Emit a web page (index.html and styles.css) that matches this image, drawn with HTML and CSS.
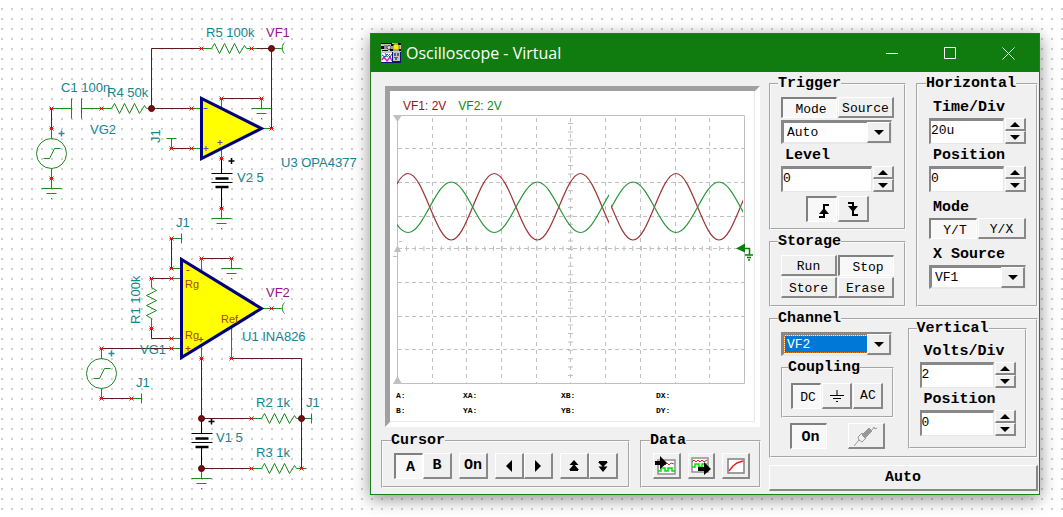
FILE: index.html
```html
<!DOCTYPE html>
<html lang="en">
<head>
<meta charset="utf-8">
<title>Oscilloscope - Virtual</title>
<link rel="stylesheet" href="styles.css">
</head>
<body>
<main class="desktop">
<svg class="schematic" width="365" height="517" viewBox="0 0 365 517" role="img" aria-label="Circuit schematic">
  <defs>
    <path id="term" d="M-2-2L2 2M-2 2L2-2M-2 0H2" stroke="#e01818" stroke-width="1"/>
    <circle id="node" r="3" fill="#7a0c10" stroke="#4a0808" stroke-width="1"/>
    <path id="resistor" d="M0 0h10l3-5l5 10l5-10l5 10l5-10l5 10l5-8l2 3h10"/>
    <path id="ground" d="M-10 0H10M-5 5H5M-.5 10h1"/>
    <path id="probe" d="M0 0h10M13-6c-3 3-3 8 0 11"/>
    <g id="source"><circle r="15"/><path d="M-8 5h6l5-10h6"/></g>
    <g id="battery" stroke="#000"><path d="M0-15V0M-10 0h21M-10 9h21M0 14V35"/><path d="M-6 5H7M-6 13.500H7" stroke-width="2.500"/></g>
  </defs>
  <g transform="translate(1.5 8.5)" fill="none">
    <g class="wire">
      <path d="M150 100V40h50M250 40h20v80M50 100v20M150 100h40M170 140h20M220 90h40"/>
      <path d="M170 230v30M150 270h20M150 320v10h20M100 340h70M100 390h30M200 250h30M200 350v60h50M230 350h70v110M200 460h50"/>
    </g>
    <g class="part">
      <path d="M50 100h20M70 90v20M80 90v20M80 100h20M50 120v10M50 160v20M190 100h10M190 140h10M165 130h10M170 130v10M260 120h10M220 90v10M260 90v10M220 140v10M220 200v10"/>
      <use href="#resistor" x="200" y="40"/><use href="#resistor" x="100" y="100"/>
      <use href="#source" x="50" y="145"/><use href="#probe" x="270" y="40"/>
      <use href="#ground" x="50" y="180"/><use href="#ground" x="260" y="100"/><use href="#ground" x="220" y="210"/>
      <path d="M170 230h10M180 225v10M170 260h10M170 270h10M170 330h10M170 340h10M200 250v13M230 250v10M260 300h10M200 338v12M230 318v32M100 340v10M100 380v10M130 390h10M140 385v10M300 410h10M310 405v10M200 460v10"/>
      <path d="M150 270v9l5 3l-10 5l10 5l-10 5l10 5l-10 5l5 3v10"/>
      <use href="#source" x="100" y="365"/><use href="#probe" x="270" y="300"/>
      <use href="#resistor" x="250" y="410"/><use href="#resistor" x="250" y="460"/>
      <use href="#ground" x="230" y="260"/><use href="#ground" x="200" y="470"/>
    </g>
    <use href="#battery" x="220" y="165"/><use href="#battery" x="200" y="425"/>
    <path class="amp" d="M200 90V150L260 120Z"/><path class="amp" d="M180 251V349L260 300Z"/>
    <path d="M202 100h4M202 140h5M204.500 137.500v5M216 134h5M218.500 131.500v5" stroke="#5050a0"/>
    <path d="M185 262h3M184 340h5M186.500 337.500v5M197 331h5M199.500 328.500v5" stroke="#a04000"/>
    <path d="M227 152.500h6M230 149.500v6M207 413h6M210 410v6" stroke="#000" stroke-width="1.500"/>
    <path d="M57 125h6M60 122v6M107 345h6M110 342v6" stroke="#20909c" stroke-width="1.500"/>
    <g>
      <use href="#term" x="200" y="40"/><use href="#term" x="250" y="40"/><use href="#term" x="50" y="100"/><use href="#term" x="50" y="120"/><use href="#term" x="100" y="100"/><use href="#term" x="190" y="100"/><use href="#term" x="170" y="140"/><use href="#term" x="190" y="140"/><use href="#term" x="220" y="90"/><use href="#term" x="260" y="90"/><use href="#term" x="270" y="120"/><use href="#term" x="220" y="150"/><use href="#term" x="220" y="200"/><use href="#term" x="50" y="170"/>
      <use href="#term" x="170" y="230"/><use href="#term" x="170" y="260"/><use href="#term" x="150" y="270"/><use href="#term" x="170" y="270"/><use href="#term" x="150" y="320"/><use href="#term" x="170" y="330"/><use href="#term" x="170" y="340"/><use href="#term" x="100" y="340"/><use href="#term" x="100" y="390"/><use href="#term" x="130" y="390"/><use href="#term" x="200" y="250"/><use href="#term" x="230" y="250"/><use href="#term" x="270" y="300"/><use href="#term" x="200" y="350"/><use href="#term" x="230" y="350"/><use href="#term" x="250" y="410"/><use href="#term" x="250" y="460"/><use href="#term" x="300" y="460"/>
      <use href="#node" x="270" y="40"/><use href="#node" x="150" y="100"/><use href="#node" x="200" y="410"/><use href="#node" x="300" y="410"/><use href="#node" x="200" y="460"/>
    </g>
  </g>
  <g class="label">
    <text x="206" y="37">R5 100k</text><text x="61" y="92">C1 100n</text><text x="107" y="97">R4 50k</text>
    <text x="90" y="134">VG2</text><text x="237" y="182">V2 5</text><text x="281" y="167">U3 OPA4377</text>
    <text transform="translate(160 143) rotate(-90)">J1</text><text x="176" y="227">J1</text>
    <text transform="translate(140 324) rotate(-90)">R1 100k</text><text x="242" y="341">U1 INA826</text>
    <text x="140" y="354">VG1</text><text x="136" y="387">J1</text><text x="256" y="407">R2 1k</text>
    <text x="306" y="407">J1</text><text x="256" y="457">R3 1k</text><text x="216" y="442">V1 5</text>
  </g>
  <g class="label label-out"><text x="266" y="37">VF1</text><text x="266" y="297">VF2</text></g>
  <g class="label label-pin"><text x="185" y="288">Rg</text><text x="185" y="339">Rg</text><text x="221" y="323">Ref</text></g>
</svg>

<section class="window" aria-label="Oscilloscope - Virtual">
  <header class="titlebar">
    <svg class="app-icon" width="20" height="20" viewBox="0 0 20 20" aria-hidden="true">
      <path fill="#c4c4c4" d="M0 0h20v20H0z"/><path fill="#000" d="M0 0h11v1H0zM0 3h3v3H0zM1 7h6v1H1zM10 1h3v2h-3zM9 6h3v2H9zM17 0h3v2h-3zM18 6h2v2h-2z"/>
      <path fill="#888" d="M3 2h3v4H3z"/><circle cx="8" cy="4.500" r="2" fill="#ddd" stroke="#444"/>
      <path fill="#ffee00" stroke="#222" stroke-width=".5" d="M13 1h4l1 2v4h-6V3z"/>
      <path fill="#fff" d="M1 10h10v9H1z"/><path fill="none" stroke="#e020d0" stroke-width="1.500" d="M1 17l2-3l3 4l3-4l2 4"/>
      <path fill="none" stroke="#2040d0" d="M1 12l3 2l2-3l3 3l2-3"/><path fill="none" stroke="#00b040" d="M4 10l2 4l3-3"/>
      <path fill="#10107a" d="M11 9h1v11h-1zM12 18h8v2h-8zM19 9h1v10h-1zM0 19h12v1H0z"/><path fill="#506080" d="M13 10h2v3h-2zM16 10h2v3h-2zM13 14h4v1h-4zM14 15h2v2h-2z"/>
    </svg>
    <h1>Oscilloscope - Virtual</h1>
    <button class="sys" type="button" aria-label="Minimize"><svg width="13" height="13" viewBox="0 0 13 13"><path d="M0 6.500h12"/></svg></button>
    <button class="sys" type="button" aria-label="Maximize"><svg width="13" height="13" viewBox="0 0 13 13"><path d="M.5.5h11v11H.5z"/></svg></button>
    <button class="sys" type="button" aria-label="Close"><svg width="13" height="13" viewBox="0 0 13 13"><path d="M.5.5l12 12M12.500.5l-12 12"/></svg></button>
  </header>

  <div class="body">
    <div class="left">
      <div class="screen">
        <div class="scales"><span>VF1: 2V</span><span class="ch2">VF2: 2V</span></div>
        <svg class="plot" viewBox="390 112 365 276" role="img" aria-label="Waveforms">
          <defs>
            <clipPath id="early"><path d="M397 115h212v270H397z"/></clipPath>
            <clipPath id="late"><path d="M611 115h132v270H611z"/></clipPath>
          </defs>
          <g fill="none" stroke="#c0c0c0">
            <path d="M397.500 115.500H744.500V383.500H397.500Z"/>
            <g stroke-dasharray="4 4"><path d="M432.500 118V383M466.500 118V383M501.500 118V383M536.500 118V383M570.500 118V383M605.500 118V383M640.500 118V383M675.500 118V383M709.500 118V383"/></g>
            <g stroke-dasharray="4 3"><path d="M398 148.500H744M398 182.500H744M398 216.500H744M398 282.500H744M398 316.500H744M398 349.500H744M398 248.500H740"/></g>
            <path d="M406 248.500H733" stroke-width="5" stroke-dasharray="1 7.700"/>
            <path d="M570.500 123V378" stroke-width="5" stroke-dasharray="1 7.400"/>
            <path d="M399 241.500h3M393 256.500h5"/>
          </g>
          <path fill="#c0c0c0" d="M393 115h9l-4.500 7zM393 384h9l-4.500-8zM394 252h7l-3.500-7z"/>
          <g fill="none" stroke="#a03438" stroke-width="1.200">
            <path clip-path="url(#early)" d="M364.900 240C380.600 240 392.300 173.500 408 173.500S435.500 240 451.200 240S478.600 173.500 494.300 173.500S521.700 240 537.400 240S564.800 173.500 580.500 173.500S608 240 623.700 240"/>
            <path clip-path="url(#late)" d="M590 173.500C605.700 173.500 617.300 240 633 240S660.300 173.500 676 173.500S703.300 240 719 240S746.300 173.500 762 173.500"/>
          </g>
          <g fill="none" stroke="#289638" stroke-width="1.200">
            <path clip-path="url(#early)" d="M364.900 182C380.600 182 392.300 232.500 408 232.500S435.500 182 451.200 182S478.600 232.500 494.300 232.500S521.700 182 537.400 182S564.800 232.500 580.500 232.500S608 182 623.700 182"/>
            <path clip-path="url(#late)" d="M590 232.500C605.700 232.500 617.300 182 633 182S660.300 232.500 676 232.500S703.300 182 719 182S746.300 232.500 762 232.500"/>
          </g>
          <path fill="#078007" d="M736 248.500l9-5v9z"/>
          <path fill="none" stroke="#078007" stroke-width="1.500" d="M744 248.500h5.500v6M745 255h8M747 257.500h4M748 260h2"/>
        </svg>
        <div class="readouts">
          <span>A:</span><span>XA:</span><span>XB:</span><span>DX:</span>
          <span>B:</span><span>YA:</span><span>YB:</span><span>DY:</span>
        </div>
      </div>
      <div class="tools">
        <fieldset class="cursor">
          <legend>Cursor</legend>
          <div class="pair"><button class="btn tool strong on" type="button">A</button><button class="btn tool strong" type="button">B</button></div>
          <button class="btn tool strong" type="button">On</button>
          <div class="pair">
            <button class="btn tool" type="button" aria-label="Left"><svg width="12" height="12" viewBox="0 0 12 12"><path d="M9 0v12L3 6z"/></svg></button>
            <button class="btn tool" type="button" aria-label="Right"><svg width="12" height="12" viewBox="0 0 12 12"><path d="M3 0v12l6-6z"/></svg></button>
          </div>
          <div class="pair">
            <button class="btn tool" type="button" aria-label="Maximum"><svg width="12" height="12" viewBox="0 0 12 12"><path d="M6 0l4.500 5H1.500zM6 4l5 6H1zM2 10h8v1H2z"/></svg></button>
            <button class="btn tool" type="button" aria-label="Minimum"><svg width="12" height="12" viewBox="0 0 12 12"><path d="M2 1h8v1H2zM1 2h10L6 7zM1.500 6.500h9L6 12z"/></svg></button>
          </div>
        </fieldset>
        <fieldset class="data">
          <legend>Data</legend>
          <button class="btn tool" type="button" aria-label="Import curve"><svg width="22" height="20" viewBox="0 0 22 20"><path fill="#fff" stroke="#909090" stroke-width="1.500" d="M3 4h17v14H3z"/><path fill="none" stroke="#f02020" d="M8 7l2 2l2-2l2 2l2-2l3 1"/><path fill="none" stroke="#00e000" stroke-width="1.500" d="M3 15h3v-3h4v3h3v-3h4v3h3"/><path d="M0 5h5V0l7 7l-7 6V9H0z"/></svg></button>
          <button class="btn tool" type="button" aria-label="Export curve"><svg width="22" height="20" viewBox="0 0 22 20"><path fill="#fff" stroke="#909090" stroke-width="1.500" d="M2 2h16v14H2z"/><path fill="none" stroke="#f02020" d="M2 6l2-2l2 2l2-2l2 2l2-2l2 2l3-2"/><path fill="none" stroke="#00e000" stroke-width="1.500" d="M2 11h3V8h4v3h3V8h5"/><path d="M8 11h6V6l7 7l-7 6v-4H8z"/></svg></button>
          <button class="btn tool" type="button" aria-label="Show curve"><svg width="20" height="20" viewBox="0 0 20 20"><path fill="#fff" stroke="#808080" stroke-width="1.500" d="M2 3h16v14H2z"/><path fill="none" stroke="#f02020" stroke-width="1.500" d="M3 15l4-5l4-3l6-2"/></svg></button>
        </fieldset>
      </div>
    </div>

    <div class="right">
      <div class="upper">
        <div class="stack">
          <fieldset class="trigger">
            <legend>Trigger</legend>
            <div class="row"><button class="btn on" type="button">Mode</button><button class="btn" type="button">Source</button></div>
            <div class="combo"><select aria-label="Trigger mode"><option>Auto</option></select></div>
            <div class="field">
              <label for="level">Level</label>
              <div class="spin"><input id="level" type="text" value="0"><div class="arrows"><button type="button" aria-label="Level up"></button><button type="button" aria-label="Level down"></button></div></div>
            </div>
            <div class="edges">
              <button class="btn tall on" type="button" aria-label="Rising edge"><svg width="12" height="14" viewBox="0 0 12 14"><path d="M6 4l5 6H1z"/><path class="line" d="M1 13h5V1h5"/></svg></button>
              <button class="btn tall" type="button" aria-label="Falling edge"><svg width="12" height="14" viewBox="0 0 12 14"><path d="M1 4h10l-5 6z"/><path class="line" d="M1 1h5v12h5"/></svg></button>
            </div>
          </fieldset>
          <fieldset class="storage">
            <legend>Storage</legend>
            <div class="row"><button class="btn" type="button">Run</button><button class="btn on" type="button">Stop</button></div>
            <div class="row"><button class="btn" type="button">Store</button><button class="btn" type="button">Erase</button></div>
          </fieldset>
        </div>
        <fieldset class="horizontal">
          <legend>Horizontal</legend>
          <div class="field">
            <label for="timediv">Time/Div</label>
            <div class="spin"><input id="timediv" type="text" value="20u"><div class="arrows"><button type="button" aria-label="Time up"></button><button type="button" aria-label="Time down"></button></div></div>
          </div>
          <div class="field">
            <label for="hpos">Position</label>
            <div class="spin"><input id="hpos" type="text" value="0"><div class="arrows"><button type="button" aria-label="Position up"></button><button type="button" aria-label="Position down"></button></div></div>
          </div>
          <div class="field spaced">
            <span class="caption">Mode</span>
            <div class="row"><button class="btn on" type="button">Y/T</button><button class="btn" type="button">Y/X</button></div>
          </div>
          <div class="field spaced">
            <label for="xsource">X Source</label>
            <div class="combo"><select id="xsource"><option>VF1</option></select></div>
          </div>
        </fieldset>
      </div>

      <fieldset class="channel">
        <legend>Channel</legend>
        <div class="stack">
          <div class="combo picked"><select aria-label="Channel"><option>VF2</option></select></div>
          <fieldset class="coupling">
            <legend>Coupling</legend>
            <div class="row">
              <button class="btn tall on" type="button">DC</button>
              <button class="btn tall" type="button" aria-label="Ground"><svg width="14" height="12" viewBox="0 0 14 12"><path class="line" d="M7 0v5M0 5.500h14M3 8.500h8M6 11.500h2"/></svg></button>
              <button class="btn tall" type="button">AC</button>
            </div>
          </fieldset>
          <div class="probe-row">
            <button class="btn tall strong on" type="button">On</button>
            <button class="btn tall" type="button" aria-label="Probe"><svg width="24" height="20" viewBox="0 0 24 20"><g fill="none" stroke="#989898"><path d="M0 20l5-6M18 4l2-3l1 2l2-1"/><path fill="#989898" d="M8 9l7-7l3 3l-7 7z"/><path d="M5 14l-1-3l4-4l4 5l-4 4z"/></g></svg></button>
          </div>
        </div>
        <fieldset class="vertical">
          <legend>Vertical</legend>
          <div class="field">
            <label for="volts">Volts/Div</label>
            <div class="spin"><input id="volts" type="text" value="2"><div class="arrows"><button type="button" aria-label="Volts up"></button><button type="button" aria-label="Volts down"></button></div></div>
          </div>
          <div class="field">
            <label for="vpos">Position</label>
            <div class="spin"><input id="vpos" type="text" value="0"><div class="arrows"><button type="button" aria-label="Position up"></button><button type="button" aria-label="Position down"></button></div></div>
          </div>
        </fieldset>
      </fieldset>
      <button class="btn tall strong auto" type="button">Auto</button>
    </div>
  </div>
</section>
</main>
</body>
</html>
```

FILE: styles.css
```css
* { box-sizing: border-box; }
body { margin: 0; font: 13px/16px "Liberation Mono", monospace; color: #000; }
button, input, select { font: inherit; color: inherit; margin: 0; }

.desktop {
  position: relative;
  min-height: 100vh;
  overflow: hidden;
  background: #fff radial-gradient(circle at 2px 9px, #d0d0d0 1px, transparent 1px) 0 0 / 10px 10px;
}
.schematic { display: block; }
.wire { stroke: #5a1c1c; }
.part { stroke: #1c8a1c; }
.amp { fill: #ffff00; stroke: #000080; stroke-width: 3; }
.label { font: 13px "Liberation Sans", sans-serif; fill: #148490; }
.label-out { fill: #90148c; }
.label-pin { font-size: 11px; fill: #a84800; }

/* Window on the desktop */
.window {
  position: absolute;
  left: 370px;
  right: 23px;
  top: 33px;
  border: 1px solid #1f7f1f;
  background: #f0f0f0;
  box-shadow: 0 4px 16px rgba(0, 0, 0, .45);
}
.titlebar { display: flex; align-items: center; height: 38px; padding: 0 2px 0 10px; background: #107c10; color: #fff; }
.titlebar h1 { flex: 1; margin: 0 0 0 5px; font: 16px/24px "Open Sans", sans-serif; }
.sys { width: 58px; height: 38px; padding: 0; border: 0; background: none; }
.sys svg { display: block; margin: auto; fill: none; stroke: #fff; }

.body { display: grid; grid-template-columns: 1fr 269px; gap: 8px; padding: 5px 1px 3px 10px; }

/* Groups and controls */
fieldset { min-width: 0; margin: 0; padding: 0; border: 2px groove #fafafa; }
legend { margin-left: -3px; padding: 0; }
legend, label, .caption, .strong { font-weight: bold; font-size: 15px; }
legend { line-height: 14px; }
.btn {
  display: flex;
  align-items: center;
  justify-content: center;
  min-width: 0;
  height: 21px;
  padding: 3px 0 0;
  border: solid;
  border-width: 1px 2px 2px 1px;
  border-color: #fff #888 #888 #fff;
  background: #f0f0f0;
}
.btn.tall, .btn.tool { height: 26px; padding-top: 0; }
.btn.on { border-width: 2px 1px 1px 2px; border-color: #808080 #fff #fff #808080; background: #f8f8f8; padding: 3px 0 0 3px; }
.line { fill: none; stroke: #000; stroke-width: 1; }
.edges .line { stroke-width: 2; }
.row { display: grid; grid-auto-flow: column; grid-auto-columns: minmax(0, 1fr); gap: 1px; }

.combo { position: relative; height: 24px; }
.combo select {
  appearance: none;
  width: 100%;
  height: 100%;
  padding: 0 3px;
  border: solid;
  border-width: 3px 2px 2px 3px;
  border-color: #888 #e8e8e8 #e8e8e8 #888;
  border-radius: 0;
  background: #fff;
}
.combo::before {
  content: "";
  position: absolute;
  inset: 2px 1px 1px auto;
  width: 21px;
  border: solid;
  border-width: 1px 2px 2px 1px;
  border-color: #fff #888 #888 #fff;
  background: #f0f0f0;
  pointer-events: none;
}
.combo::after {
  content: "";
  position: absolute;
  right: 8px;
  top: 10px;
  border: solid transparent;
  border-width: 5px 5px 0;
  border-top-color: #000;
  pointer-events: none;
}
.picked select { color: #fff; background: #0078d7 padding-box; box-shadow: inset 0 0 0 1px #fff; outline: 1px dotted #f08020; outline-offset: -4px; }

.field { display: grid; grid-template-columns: minmax(0, 1fr); gap: 2px; }
.field label, .caption { margin-left: 4px; line-height: 16px; white-space: nowrap; }
.spin { display: flex; gap: 1px; height: 26px; }
.spin input {
  flex: 1;
  width: 0;
  min-width: 0;
  padding: 0 0 2px;
  border: solid;
  border-width: 3px 1px 1px 2px;
  border-color: #888 #e8e8e8 #e8e8e8 #888;
  border-radius: 0;
  background: #fff;
}
.arrows { display: grid; width: 21px; grid-template-rows: 1fr 1fr; }
.arrows button {
  display: grid;
  place-items: center;
  padding: 0;
  border: solid;
  border-width: 1px 2px 2px 1px;
  border-color: #fff #888 #888 #fff;
  background: #f0f0f0;
}
.arrows button::before { content: ""; border: solid transparent; border-width: 0 5px 5px; border-bottom-color: #000; }
.arrows button + button::before { border-width: 5px 5px 0; border-top-color: #000; }

/* Display */
.left { display: flex; flex-direction: column; gap: 7px; padding-top: 9px; }
.screen {
  margin: 0 1px 0 4px;
  border: 5px solid;
  border-color: #a0a0a0 #fff #fff #a0a0a0;
  background: #fff;
  box-shadow: inset -1px -1px #e8e8e8;
  padding-bottom: 4px;
}
.scales { display: flex; gap: 12px; height: 21px; padding: 7px 0 0 13px; font: 12px/16px "Liberation Sans", sans-serif; color: #8c1820; }
.ch2 { color: #088a18; }
.plot { display: block; width: 100%; }
.readouts { display: grid; grid-template-columns: 67fr 98fr 95fr 99fr; padding-left: 6px; font-size: 8px; font-weight: bold; line-height: 15px; }
.tools { display: grid; grid-template-columns: 249fr 121fr; gap: 10px; }
.tools fieldset { padding: 5px 9px 7px 11px; }
.cursor, .data { display: flex; gap: 7px; }
.pair { display: flex; }
.tool { width: 29px; }
.tool svg { flex: none; }

/* Control columns */
.right { display: flex; flex-direction: column; gap: 5px; }
.upper { display: grid; grid-template-columns: 137fr 122fr; gap: 10px; }
.stack { display: flex; flex-direction: column; gap: 5px; min-width: 0; }
.trigger { padding: 6px 10px; }
.storage { padding: 6px 10px 7px; }
.storage .row + .row { margin-top: 1px; }
.trigger .combo { margin: 2px 2px 4px 0; }
.edges { display: flex; justify-content: center; gap: 1px; margin-top: 4px; }
.edges .btn { width: 31px; }
.horizontal { padding: 9px 10px 0 11px; }
.horizontal .field + .field { margin-top: 4px; }
.horizontal .field + .spaced { margin-top: 8px; }

.channel { display: grid; grid-template-columns: 113fr 120fr; gap: 14px; padding: 6px 9px 7px 10px; }
.channel .combo { margin-right: 2px; }
.coupling { padding: 8px 8px 7px; }
.probe-row { display: flex; justify-content: space-between; padding: 0 9px; }
.probe-row .btn { width: 37px; }
.vertical { margin-top: -10px; padding: 8px 9px 7px 10px; }
.vertical .field + .field { margin-top: 4px; }
.auto { margin-top: 2px; }
```
